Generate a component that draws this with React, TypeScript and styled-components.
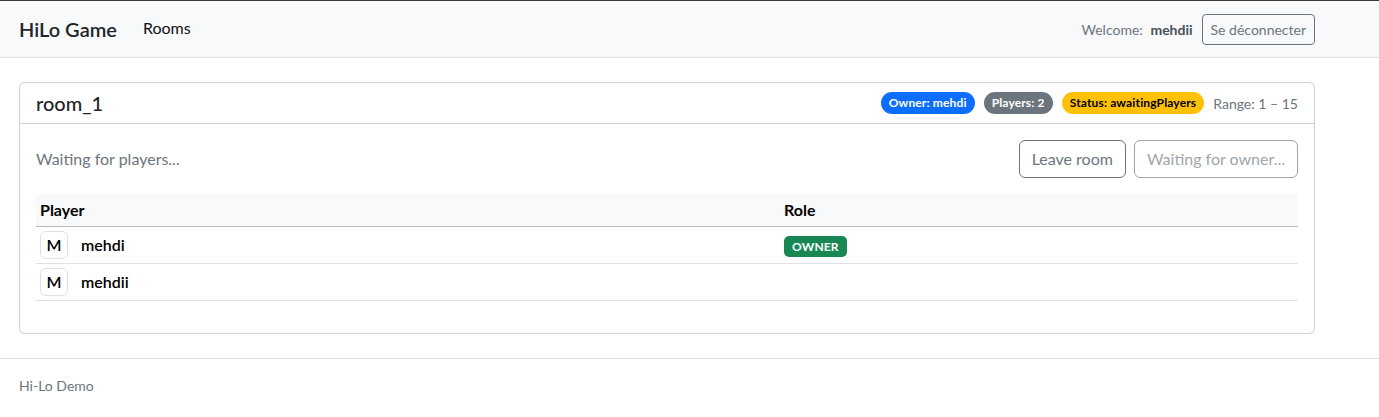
import styled, { createGlobalStyle } from 'styled-components';

const GlobalStyle = createGlobalStyle`
  * { box-sizing: border-box; }
  body {
    margin: 0;
    font-family: "Segoe UI", Lato, "Noto Sans", "Liberation Sans", sans-serif;
    font-size: 16px;
    line-height: 1.5;
    color: #212529;
    background: #fff;
    border-top: 1px solid #3a3a3a;
  }
`;

const players = [
  { name: 'mehdi', owner: true },
  { name: 'mehdii', owner: false },
];

const badgeColors: Record<string, { bg: string; fg: string }> = {
  primary: { bg: '#0d6efd', fg: '#fff' },
  secondary: { bg: '#6c757d', fg: '#fff' },
  warning: { bg: '#ffc107', fg: '#000' },
  success: { bg: '#198754', fg: '#fff' },
};

export default function App() {
  return (
    <>
      <GlobalStyle />
      <SNavbar>
        <SNavInner>
          <SBrand>HiLo Game</SBrand>
          <SNavLink>Rooms</SNavLink>
          <SNavRight>
            <SWelcome>
              Welcome: <b>mehdii</b>
            </SWelcome>
            <SButton $size="sm">Se déconnecter</SButton>
          </SNavRight>
        </SNavInner>
      </SNavbar>

      <SMain>
        <SCard>
          <SCardHeader>
            <STitle>room_1</STitle>
            <SMeta>
              <SBadge $variant="primary" $pill>Owner: mehdi</SBadge>
              <SBadge $variant="secondary" $pill>Players: 2</SBadge>
              <SBadge $variant="warning" $pill>Status: awaitingPlayers</SBadge>
              <SRange>Range: 1 – 15</SRange>
            </SMeta>
          </SCardHeader>
          <SCardBody>
            <SStatusRow>
              <SMuted>Waiting for players...</SMuted>
              <SActions>
                <SButton>Leave room</SButton>
                <SButton disabled>Waiting for owner...</SButton>
              </SActions>
            </SStatusRow>
            <STable>
              <thead>
                <tr>
                  <STh style={{ width: 744 }}>Player</STh>
                  <STh>Role</STh>
                </tr>
              </thead>
              <tbody>
                {players.map((p) => (
                  <tr key={p.name}>
                    <STd>
                      <SPlayer>
                        <SAvatar>{p.name[0].toUpperCase()}</SAvatar>
                        <SName>{p.name}</SName>
                      </SPlayer>
                    </STd>
                    <STd>
                      {p.owner && <SBadge $variant="success">OWNER</SBadge>}
                    </STd>
                  </tr>
                ))}
              </tbody>
            </STable>
          </SCardBody>
        </SCard>
      </SMain>

      <SFooter>
        <SFooterInner>Hi-Lo Demo</SFooterInner>
      </SFooter>
    </>
  );
}

const SNavbar = styled.nav`
  background: #f8f9fa;
  border-bottom: 1px solid #dee2e6;
  padding: 8px 0;
`;

const SNavInner = styled.div`
  width: 1315px;
  padding-left: 19px;
  display: flex;
  align-items: center;
`;

const SBrand = styled.span`
  font-size: 20px;
  font-weight: 600;
  line-height: 30px;
  padding: 5px 0;
  margin-right: 26px;
`;

const SNavLink = styled.span`
  font-size: 16px;
  color: #111;
  margin-top: -2px;
`;

const SNavRight = styled.div`
  margin-left: auto;
  display: flex;
  align-items: center;
  gap: 9px;
`;

const SWelcome = styled.span`
  font-size: 14px;
  color: #6c757d;

  b {
    color: #495057;
    margin-left: 4px;
  }
`;

const SButton = styled.button<{ $size?: 'sm' }>`
  font-family: inherit;
  font-size: ${(p) => (p.$size === 'sm' ? '14px' : '16px')};
  line-height: 1.5;
  padding: ${(p) => (p.$size === 'sm' ? '4px 8px' : '6px 12px')};
  border: 1px solid #6c757d;
  border-radius: ${(p) => (p.$size === 'sm' ? '4px' : '6px')};
  background: transparent;
  color: #6c757d;

  &:disabled {
    opacity: 0.65;
  }
`;

const SMain = styled.main`
  padding: 24px 0 24px 19px;
`;

const SCard = styled.div`
  width: 1296px;
  border: 1px solid rgba(0, 0, 0, 0.175);
  border-radius: 6px;
  background: #fff;
`;

const SCardHeader = styled.div`
  display: flex;
  align-items: center;
  justify-content: space-between;
  padding: 8px 16px;
  border-bottom: 1px solid rgba(0, 0, 0, 0.175);
`;

const STitle = styled.h5`
  margin: 0;
  font-size: 20px;
  font-weight: 500;
  line-height: 24px;
`;

const SMeta = styled.div`
  display: flex;
  align-items: center;
  gap: 9px;
`;

const SBadge = styled.span<{ $variant: string; $pill?: boolean }>`
  display: inline-block;
  padding: 4px 8px;
  font-size: 12px;
  font-weight: 700;
  line-height: 1.1;
  letter-spacing: 0.15px;
  border-radius: ${(p) => (p.$pill ? '999px' : '5px')};
  background: ${(p) => badgeColors[p.$variant].bg};
  color: ${(p) => badgeColors[p.$variant].fg};
`;

const SRange = styled.span`
  font-size: 14px;
  color: #6c757d;
`;

const SCardBody = styled.div`
  padding: 16px;
`;

const SStatusRow = styled.div`
  display: flex;
  align-items: center;
  justify-content: space-between;
  margin-bottom: 16px;
`;

const SMuted = styled.span`
  color: #6c757d;
`;

const SActions = styled.div`
  display: flex;
  gap: 8px;
`;

const STable = styled.table`
  width: 100%;
  border-collapse: collapse;
  margin-bottom: 16px;
`;

const STh = styled.th`
  text-align: left;
  padding: 4px;
  font-weight: 700;
  color: #000;
  background: #f8f9fa;
  border-bottom: 1px solid #b9bcbf;
`;

const STd = styled.td`
  padding: 4px;
  border-bottom: 1px solid #dee2e6;
  vertical-align: middle;
`;

const SPlayer = styled.div`
  display: flex;
  align-items: center;
  gap: 13px;
`;

const SAvatar = styled.span`
  width: 28px;
  height: 28px;
  border: 1px solid #dee2e6;
  border-radius: 6px;
  display: flex;
  align-items: center;
  justify-content: center;
  font-weight: 600;
  color: #000;
`;

const SName = styled.span`
  font-weight: 600;
  color: #000;
`;

const SFooter = styled.footer`
  border-top: 1px solid #dee2e6;
  padding: 16px 0;
`;

const SFooterInner = styled.div`
  padding-left: 19px;
  font-size: 14px;
  color: #6c757d;
`;
